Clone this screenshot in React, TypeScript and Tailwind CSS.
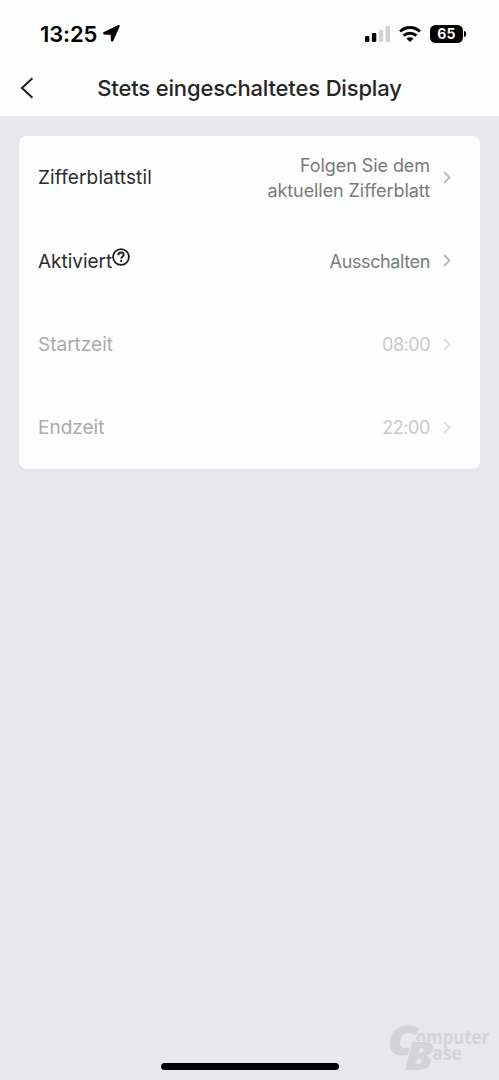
type ChevronProps = {
  className?: string;
};

type RowProps = {
  label: string;
  labelClass: string;
  value: string;
  valueClass: string;
  help?: boolean;
  disabled?: boolean;
};

function Chevron({ className }: ChevronProps) {
  return (
    <svg viewBox="0 0 8 13" className={`h-[13px] w-2 shrink-0 ${className}`} fill="none">
      <path d="M1 1 6.6 6.5 1 12" stroke="currentColor" strokeWidth="1.8" />
    </svg>
  );
}

function HelpIcon() {
  return (
    <svg viewBox="0 0 18 18" className="-mt-[10px] h-[18px] w-[18px]" fill="none" stroke="#1c1c1c">
      <circle cx="9" cy="9" r="7.9" strokeWidth="1.8" />
      <path d="M6.3 7.2C6.3 5.4 7.5 4.5 9 4.5s2.7.9 2.7 2.3c0 1.8-2.6 1.9-2.6 3.8" strokeWidth="1.9" />
      <circle cx="9.1" cy="12.9" r="1.05" fill="#1c1c1c" stroke="none" />
    </svg>
  );
}

function StatusBar() {
  return (
    <div className="flex h-[60px] items-center justify-between pt-[7px] pr-[33px] pl-[40px] text-black">
      <div className="flex items-center gap-[6px]">
        <span className="text-[22px] leading-none font-semibold tracking-[-0.1px]">13:25</span>
        <svg viewBox="0 0 17 17" className="h-[17px] w-[17px]">
          <path
            d="M15.7 1.3 9.5 15.3c-.2.5-.7.4-.7-.1L8.6 9.1 1.5 8.6c-.6 0-.7-.5-.2-.8L15.2 1c.5-.3.7-.2.5.3Z"
            stroke="#000"
            strokeWidth="1.8"
            strokeLinejoin="round"
          />
        </svg>
      </div>
      <div className="flex items-center">
        <svg viewBox="0 0 25 16" className="h-4 w-[25px]">
          <rect x="0" y="10" width="4.4" height="6" rx="1.3" />
          <rect x="6.9" y="7" width="4.4" height="9" rx="1.3" />
          <rect x="13.8" y="3.7" width="4.4" height="12.3" rx="1.3" fill="#d2d2d2" />
          <rect x="20.6" y="0" width="4.4" height="16" rx="1.3" fill="#d2d2d2" />
        </svg>
        <svg viewBox="0 0 22 16" className="ml-[9px] h-4 w-[22px]" fill="none" stroke="#000" strokeWidth="3">
          <path d="M1.1 5.5C6.7.3 15.3.3 20.9 5.5" />
          <path d="M4.6 9.6c3.6-3.3 9.2-3.3 12.8 0" />
          <path d="M7.4 12.5c1.9-1.8 5.3-1.8 7.2 0L11 16Z" fill="#000" stroke="none" />
        </svg>
        <div className="ml-[9px] flex h-[18px] w-[33px] items-center justify-center rounded-[5.5px] bg-black">
          <span className="text-[14px] leading-none font-bold tracking-[0.3px] text-white">65</span>
        </div>
        <div className="ml-px h-[6px] w-[2px] rounded-r-full bg-black" />
      </div>
    </div>
  );
}

function SettingRow({ label, labelClass, value, valueClass, help, disabled }: RowProps) {
  return (
    <div className="flex h-[83.25px] items-center justify-between pr-[29.5px] pl-[19px]">
      <div className="flex items-center pt-[2px] text-[19px]">
        <span className={labelClass}>{label}</span>
        {help && <HelpIcon />}
      </div>
      <div className="flex items-center gap-[12.5px]">
        <span className={`text-right text-[18px] leading-[25px] whitespace-pre-line ${valueClass}`}>
          {value}
        </span>
        <Chevron className={disabled ? "text-[#dedede]" : "text-[#b9b9b9]"} />
      </div>
    </div>
  );
}

function Watermark() {
  return (
    <svg
      viewBox="0 0 112 60"
      className="absolute top-[1020px] left-[387px] h-[60px] w-[112px] overflow-visible font-['Open_Sans',sans-serif] font-bold"
      fill="#d2d4d8"
    >
      <text x="1" y="35" fontSize="40" fontWeight="800" fontStyle="italic" textLength="29" lengthAdjust="spacingAndGlyphs" stroke="#d2d4d8" strokeWidth="1">C</text>
      <text x="29" y="24" fontSize="19" textLength="73" lengthAdjust="spacingAndGlyphs">omputer</text>
      <text x="17.5" y="49.5" fontSize="39" fontWeight="800" fontStyle="italic" textLength="29" lengthAdjust="spacingAndGlyphs" stroke="#e7e8ec" strokeWidth="2" paintOrder="stroke">B</text>
      <text x="45" y="40" fontSize="19" textLength="30" lengthAdjust="spacingAndGlyphs">ase</text>
    </svg>
  );
}

export default function App() {
  return (
    <div className="relative flex h-[1080px] w-[499px] flex-col overflow-hidden bg-[#e7e8ec] font-['Inter',sans-serif]">
      <header className="h-[116px] bg-[#fdfefe]">
        <StatusBar />
        <div className="flex h-[56px] items-center justify-center">
          <button className="flex w-[54px] shrink-0 pl-[20px]" aria-label="Zurück">
            <svg viewBox="0 0 14 22" className="h-[22px] w-[14px]" fill="none">
              <path d="M12.4 1.2 2 11l10.4 9.8" stroke="#1c1c1c" strokeWidth="2" />
            </svg>
          </button>
          <h1 className="flex-1 pt-px pr-[54px] text-center text-[22px] font-medium tracking-[-0.16px] whitespace-nowrap text-[#262626]">
            Stets eingeschaltetes Display
          </h1>
        </div>
      </header>
      <main className="mx-[19px] mt-[20px] rounded-[8px] bg-[#fdfefe]">
        <SettingRow
          label="Zifferblattstil"
          labelClass="tracking-[0.13px] text-[#2c2c2c]"
          value={"Folgen Sie dem\naktuellen Zifferblatt"}
          valueClass="tracking-[-0.07px] text-[#7a7a7a]"
        />
        <SettingRow
          label="Aktiviert"
          labelClass="tracking-[-0.03px] text-[#2c2c2c]"
          value="Ausschalten"
          valueClass="pt-px tracking-[-0.38px] text-[#7a7a7a]"
          help
        />
        <SettingRow
          label="Startzeit"
          labelClass="text-[#ababab]"
          value="08:00"
          valueClass="tracking-[-0.5px] text-[#cacaca]"
          disabled
        />
        <SettingRow
          label="Endzeit"
          labelClass="text-[#ababab]"
          value="22:00"
          valueClass="tracking-[-0.4px] text-[#cacaca]"
          disabled
        />
      </main>
      <Watermark />
      <div className="mt-auto mb-[10px] h-[7px] w-[178px] self-center rounded-full bg-black" />
    </div>
  );
}
